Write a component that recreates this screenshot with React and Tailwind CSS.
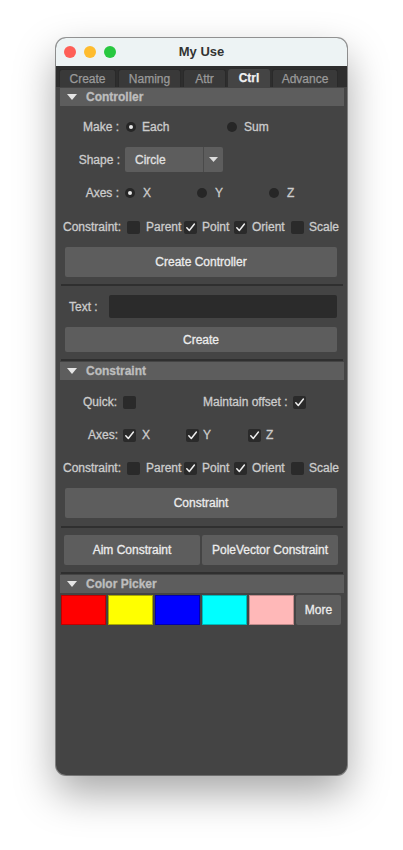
import React from "react";

const font = { fontFamily: '"Liberation Sans", Arial, sans-serif' };

function Radio({ on }) {
  return (
    <span className="w-[10px] h-[10px] rounded-full bg-[#262626] flex items-center justify-center shrink-0">
      {on && <span className="w-[4px] h-[4px] rounded-full bg-[#e8e8e8]" />}
    </span>
  );
}

function Check({ on }) {
  return (
    <span className="w-[13px] h-[13px] rounded-[2px] bg-[#2a2a2a] flex items-center justify-center shrink-0">
      {on && (
        <svg width="11" height="11" viewBox="0 0 11 11">
          <path d="M1.8 5.8 L4.3 8.5 L9.4 2" fill="none" stroke="#f0f0f0" strokeWidth="1.5" strokeLinecap="round" strokeLinejoin="round" />
        </svg>
      )}
    </span>
  );
}

function Header({ title }) {
  return (
    <div className="h-[18px] bg-[#5d5d5d] flex items-center pl-[7px]">
      <svg width="10" height="7" viewBox="0 0 10 7">
        <path d="M0 0 L10 0 L5 6 Z" fill="#e6e6e6" />
      </svg>
      <span className="ml-[9px] text-[12px] font-bold text-[#bdbdbd]">{title}</span>
    </div>
  );
}

function Btn({ children, className = "" }) {
  return (
    <div className={"bg-[#5d5d5d] rounded-[2px] flex items-center justify-center text-[12px] text-[#ececec] " + className}>
      {children}
    </div>
  );
}

function Sep({ className = "" }) {
  return <div className={"h-[2px] bg-[#2f2f2f] mx-[1px] " + className} />;
}

function ConstraintRow({ className = "" }) {
  return (
    <div className={"h-[22px] flex items-center text-[12px] " + className}>
      <span className="w-[67px] pl-[3px]">Constraint:</span>
      <div className="w-[57px] flex items-center gap-[6px]"><Check /><span>Parent</span></div>
      <div className="w-[50px] flex items-center gap-[5px]"><Check on /><span>Point</span></div>
      <div className="w-[57px] flex items-center gap-[5px]"><Check on /><span>Orient</span></div>
      <div className="flex items-center gap-[5px]"><Check /><span>Scale</span></div>
    </div>
  );
}

export default function App() {
  const tabs = [
    ["Create", "w-[57px]"],
    ["Naming", "w-[63px]"],
    ["Attr", "w-[43px]"],
    ["Ctrl", "w-[42px]"],
    ["Advance", "w-[66px]"],
  ];
  return (
    <div className="w-[403px] h-[850px] bg-white pt-[38px] pl-[56px]" style={font}>
      <div className="w-[291px] h-[737px] rounded-[10px] overflow-hidden flex flex-col bg-[#444444] shadow-[0_18px_40px_rgba(0,0,0,0.35)] ring-1 ring-black/40">
        {/* Title bar */}
        <div className="h-[28px] bg-[#edf3f4] grid grid-cols-[1fr_auto_1fr] items-center shrink-0">
          <div className="flex items-center pl-[8px] gap-[8px]">
            <span className="w-[12px] h-[12px] rounded-full bg-[#fe5f57]" />
            <span className="w-[12px] h-[12px] rounded-full bg-[#febc2e]" />
            <span className="w-[12px] h-[12px] rounded-full bg-[#28c840]" />
          </div>
          <div className="text-[13px] font-bold text-[#333333]">My Use</div>
          <div />
        </div>
        {/* Tabs */}
        <div className="h-[21px] bg-[#2e2e2e] flex items-end pl-[3px] gap-[2px] shrink-0 [-webkit-text-stroke:0.25px_currentColor]">
          {tabs.map(([t, w]) => {
            const sel = t === "Ctrl";
            return (
              <div
                key={t}
                className={
                  w +
                  " h-[18px] rounded-t-[3px] flex items-center justify-center text-[12px] " +
                  (sel
                    ? "bg-[#444444] text-[#f2f2f2] font-bold"
                    : "bg-[#393939] text-[#9a9a9a] border border-b-0 border-[#2a2a2a]")
                }
              >
                {t}
              </div>
            );
          })}
        </div>
        {/* Content */}
        <div className="flex-1 pl-[4px] pr-[3px] pt-[1px] flex flex-col text-[12px] text-[#cccccc] [-webkit-text-stroke:0.3px_currentColor]">
          <Header title="Controller" />

          {/* Make */}
          <div className="mt-[10px] h-[22px] flex items-center">
            <span className="w-[59px] text-right">Make :</span>
            <div className="ml-[7px] w-[101px] flex items-center gap-[6px]"><Radio on /><span>Each</span></div>
            <div className="flex items-center gap-[7px]"><Radio /><span>Sum</span></div>
          </div>

          {/* Shape */}
          <div className="mt-[9px] h-[25px] flex items-center">
            <span className="w-[60px] text-right">Shape :</span>
            <div className="ml-[5px] w-[98px] h-[25px] bg-[#5d5d5d] rounded-[2px] flex items-stretch">
              <span className="flex-1 flex items-center pl-[10px] text-[#e0e0e0]">Circle</span>
              <span className="w-[1px] bg-[#4a4a4a]" />
              <span className="w-[19px] flex items-center justify-center">
                <svg width="9" height="6" viewBox="0 0 9 6"><path d="M0 0 L9 0 L4.5 5 Z" fill="#dcdcdc" /></svg>
              </span>
            </div>
          </div>

          {/* Axes */}
          <div className="mt-[10px] h-[22px] flex items-center">
            <span className="w-[59px] text-right">Axes :</span>
            <div className="ml-[6px] w-[72px] flex items-center gap-[8px]"><Radio on /><span>X</span></div>
            <div className="w-[72px] flex items-center gap-[8px]"><Radio /><span>Y</span></div>
            <div className="flex items-center gap-[8px]"><Radio /><span>Z</span></div>
          </div>

          <ConstraintRow className="mt-[12px]" />

          <Btn className="mt-[9px] ml-[5px] w-[272px] h-[30px]">Create Controller</Btn>

          <Sep className="mt-[7px]" />

          {/* Text */}
          <div className="mt-[9px] h-[23px] flex items-center">
            <span className="w-[49px] pl-[9px]">Text :</span>
            <div className="w-[228px] h-[23px] bg-[#2b2b2b] rounded-[2px]" />
          </div>

          <Btn className="mt-[9px] ml-[5px] w-[272px] h-[25px]">Create</Btn>

          <Sep className="mt-[7px]" />

          <div className="mt-[1px]"><Header title="Constraint" /></div>

          {/* Quick */}
          <div className="mt-[11px] h-[22px] flex items-center">
            <div className="w-[143px] flex items-center">
              <span className="w-[57px] text-right">Quick:</span>
              <span className="ml-[6px]"><Check /></span>
            </div>
            <span>Maintain offset :</span>
            <span className="ml-[5px]"><Check on /></span>
          </div>

          {/* Axes checks */}
          <div className="mt-[11px] h-[22px] flex items-center">
            <span className="w-[58px] text-right">Axes:</span>
            <div className="ml-[5px] w-[63px] flex items-center gap-[6px]"><Check on /><span>X</span></div>
            <div className="w-[62px] flex items-center gap-[4px]"><Check on /><span>Y</span></div>
            <div className="flex items-center gap-[5px]"><Check on /><span>Z</span></div>
          </div>

          <ConstraintRow className="mt-[11px]" />

          <Btn className="mt-[9px] ml-[5px] w-[272px] h-[30px]">Constraint</Btn>

          <Sep className="mt-[8px]" />

          <div className="mt-[7px] ml-[4px] flex gap-[2px]">
            <Btn className="w-[136px] h-[30px]">Aim Constraint</Btn>
            <Btn className="w-[136px] h-[30px]">PoleVector Constraint</Btn>
          </div>

          <Sep className="mt-[7px]" />

          <div className="mt-[1px]"><Header title="Color Picker" /></div>

          <div className="mt-[2px] ml-[1px] flex gap-[2px]">
            <div className="w-[45px] h-[30px] bg-[#ff0000] border border-[#c00000]" />
            <div className="w-[45px] h-[30px] bg-[#ffff00] border border-[#a8a800]" />
            <div className="w-[45px] h-[30px] bg-[#0000ff] border border-[#0000b0]" />
            <div className="w-[45px] h-[30px] bg-[#00ffff] border border-[#00b8b8]" />
            <div className="w-[45px] h-[30px] bg-[#ffb8b8] border border-[#c08a8a]" />
            <Btn className="w-[45px] h-[30px]">More</Btn>
          </div>
        </div>
      </div>
    </div>
  );
}
